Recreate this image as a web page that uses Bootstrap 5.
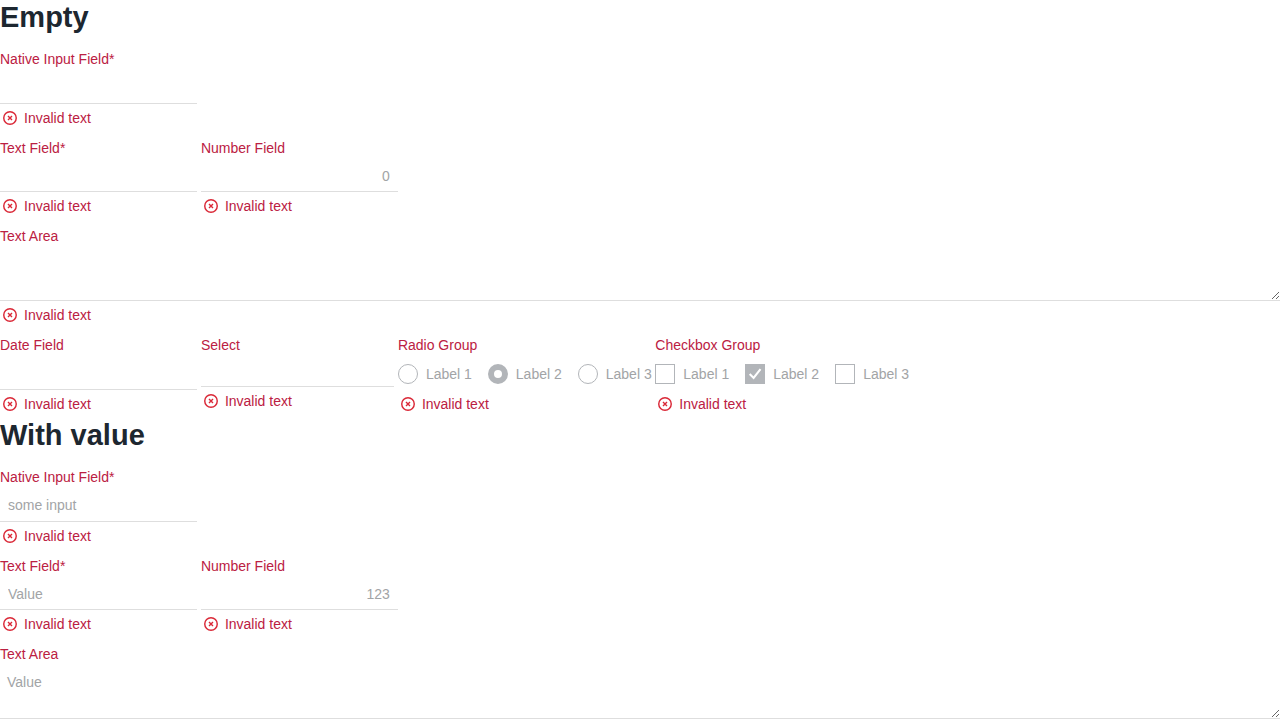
<!DOCTYPE html>
<html lang="en">
<head>
<meta charset="utf-8">
<meta name="viewport" content="width=device-width, initial-scale=1">
<title>Invalid fields</title>
<link href="https://cdn.jsdelivr.net/npm/bootstrap@5.3.0/dist/css/bootstrap.min.css" rel="stylesheet">
<style>
  body { font: 14px/20px "Liberation Sans", Arial, sans-serif; color: #1d2730; background: #fff; height: 100vh; }
  .fields-section { height: 418px; }
  .fields-title { font-size: 29px; line-height: 34px; font-weight: 700; height: 49px; color: #1d2730; }
  .line { gap: 3.9px; }
  .line-1 { height: 89px; }
  .line-2 { height: 88px; }
  .line-3 { height: 109px; }
  .w-field { width: 197px; }
  .w-select { width: 193.1px; }
  .radio-group { margin-right: -.3px; }
  .form-label { color: #bb2042; line-height: 20px; }
  .form-control, .form-select, .form-control:disabled, .form-select:disabled {
    font-size: 14px; line-height: 20px; color: #a2a4a6; opacity: 1;
    background: #fff; border: 0; border-bottom: 1px solid #dedede; border-radius: 0;
    padding: 8px 8px 6px; height: 34px; min-height: 0;
  }
  .form-control.tall { height: 35px; padding-bottom: 7px; }
  .form-select:disabled { height: 32px; }
  textarea.form-control:disabled { height: 55px; min-height: 0; padding: 8px 7px 0; overflow: hidden; }
  .help { color: #bb2042; margin-top: 4px; line-height: 20px; }
  .help svg { width: 20px; height: 20px; margin-right: 4px; color: #da2837; flex: none; }
  .choices { gap: 16px; height: 35px; padding-top: 9px; color: #a2a4a6; }
  .form-check-input, .form-check-input:disabled { width: 20px; height: 20px; border: 1px solid #b2b5b9; opacity: 1; margin: 0 8px 0 0; background-color: #fff; flex: none; }
  .form-check-input[type=checkbox] { border-radius: 0; }
  .form-check-input[type=radio]:checked { border: 6px solid #b2b5b9; background: #fff; }
  .form-check-input[type=checkbox]:checked {
    background: #b2b5b9 url("data:image/svg+xml,%3Csvg xmlns='http://www.w3.org/2000/svg' viewBox='0 0 20 20'%3E%3Cpath d='M4.7 10 8.6 13.9 15.5 5.1' fill='none' stroke='%23fff' stroke-width='2.1'/%3E%3C/svg%3E") center/20px no-repeat;
  }
  .form-check-input:disabled ~ .form-check-label { opacity: 1; }
</style>
</head>
<body class="m-0 overflow-hidden">
<svg class="d-none" aria-hidden="true">
  <symbol id="invalid" viewBox="0 0 20 20">
    <circle cx="10" cy="10" r="6.25" fill="none" stroke="currentColor" stroke-width="1.45"/>
    <path d="M8 8l4 4M12 8l-4 4" fill="none" stroke="currentColor" stroke-width="1.4"/>
  </symbol>
</svg>

<section class="fields-section">
  <h1 class="fields-title m-0">Empty</h1>
  <div class="line line-1 d-flex">
    <div class="w-field">
      <label class="form-label d-block m-0" for="a1">Native Input Field*</label>
      <input id="a1" class="form-control tall" type="text" disabled>
      <div class="help d-flex"><svg><use href="#invalid"/></svg>Invalid text</div>
    </div>
  </div>
  <div class="line line-2 d-flex">
    <div class="w-field">
      <label class="form-label d-block m-0" for="a2">Text Field*</label>
      <input id="a2" class="form-control" type="text" disabled>
      <div class="help d-flex"><svg><use href="#invalid"/></svg>Invalid text</div>
    </div>
    <div class="w-field">
      <label class="form-label d-block m-0" for="a3">Number Field</label>
      <input id="a3" class="form-control text-end" type="text" value="0" disabled>
      <div class="help d-flex"><svg><use href="#invalid"/></svg>Invalid text</div>
    </div>
  </div>
  <div class="line-3">
    <label class="form-label d-block m-0" for="a4">Text Area</label>
    <textarea id="a4" class="form-control d-block" disabled></textarea>
    <div class="help d-flex"><svg><use href="#invalid"/></svg>Invalid text</div>
  </div>
  <div class="line d-flex">
    <div class="w-field">
      <label class="form-label d-block m-0" for="a5">Date Field</label>
      <input id="a5" class="form-control tall" type="text" disabled>
      <div class="help d-flex"><svg><use href="#invalid"/></svg>Invalid text</div>
    </div>
    <div class="w-select">
      <label class="form-label d-block m-0" for="a6">Select</label>
      <select id="a6" class="form-select" disabled></select>
      <div class="help d-flex"><svg><use href="#invalid"/></svg>Invalid text</div>
    </div>
    <div class="radio-group">
      <div class="form-label m-0">Radio Group</div>
      <div class="choices d-flex">
        <div class="d-flex"><input class="form-check-input" type="radio" name="r" id="r1" disabled><label class="form-check-label" for="r1">Label 1</label></div>
        <div class="d-flex"><input class="form-check-input" type="radio" name="r" id="r2" checked disabled><label class="form-check-label" for="r2">Label 2</label></div>
        <div class="d-flex"><input class="form-check-input" type="radio" name="r" id="r3" disabled><label class="form-check-label" for="r3">Label 3</label></div>
      </div>
      <div class="help d-flex"><svg><use href="#invalid"/></svg>Invalid text</div>
    </div>
    <div>
      <div class="form-label m-0">Checkbox Group</div>
      <div class="choices d-flex">
        <div class="d-flex"><input class="form-check-input" type="checkbox" id="c1" disabled><label class="form-check-label" for="c1">Label 1</label></div>
        <div class="d-flex"><input class="form-check-input" type="checkbox" id="c2" checked disabled><label class="form-check-label" for="c2">Label 2</label></div>
        <div class="d-flex"><input class="form-check-input" type="checkbox" id="c3" disabled><label class="form-check-label" for="c3">Label 3</label></div>
      </div>
      <div class="help d-flex"><svg><use href="#invalid"/></svg>Invalid text</div>
    </div>
  </div>
</section>

<section>
  <h1 class="fields-title m-0">With value</h1>
  <div class="line line-1 d-flex">
    <div class="w-field">
      <label class="form-label d-block m-0" for="b1">Native Input Field*</label>
      <input id="b1" class="form-control tall" type="text" value="some input" disabled>
      <div class="help d-flex"><svg><use href="#invalid"/></svg>Invalid text</div>
    </div>
  </div>
  <div class="line line-2 d-flex">
    <div class="w-field">
      <label class="form-label d-block m-0" for="b2">Text Field*</label>
      <input id="b2" class="form-control" type="text" value="Value" disabled>
      <div class="help d-flex"><svg><use href="#invalid"/></svg>Invalid text</div>
    </div>
    <div class="w-field">
      <label class="form-label d-block m-0" for="b3">Number Field</label>
      <input id="b3" class="form-control text-end" type="text" value="123" disabled>
      <div class="help d-flex"><svg><use href="#invalid"/></svg>Invalid text</div>
    </div>
  </div>
  <div>
    <label class="form-label d-block m-0" for="b4">Text Area</label>
    <textarea id="b4" class="form-control d-block" disabled>Value</textarea>
  </div>
</section>
<script src="https://cdn.jsdelivr.net/npm/bootstrap@5.3.0/dist/js/bootstrap.bundle.min.js"></script>
</body>
</html>
